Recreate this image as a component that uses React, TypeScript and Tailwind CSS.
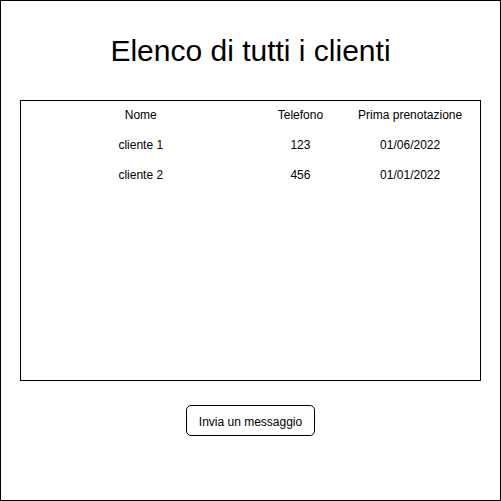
const clients = [
  { name: "cliente 1", phone: "123", firstBooking: "01/06/2022" },
  { name: "cliente 2", phone: "456", firstBooking: "01/01/2022" },
];

export default function App() {
  return (
    <main className="flex min-h-screen flex-col items-center border border-black bg-white px-[19px] font-['Liberation_Sans',Arial,sans-serif] text-xs text-black">
      <h1 className="mt-7 text-center text-[30px] leading-11">Elenco di tutti i clienti</h1>
      <section className="mt-[27px] min-h-[281px] w-full border border-black">
        <table className="w-full table-fixed text-center">
          <colgroup>
            <col className="w-12/23" />
            <col className="w-4/23" />
            <col className="w-7/23" />
          </colgroup>
          <thead>
            <tr className="h-[30px]">
              <th scope="col" className="p-0 pb-0.5 font-normal">Nome</th>
              <th scope="col" className="p-0 pb-0.5 font-normal">Telefono</th>
              <th scope="col" className="p-0 pb-0.5 font-normal">Prima prenotazione</th>
            </tr>
          </thead>
          <tbody>
            {clients.map((client) => (
              <tr key={client.name} className="h-[30px]">
                <td className="p-0 pb-0.5">{client.name}</td>
                <td className="p-0 pb-0.5">{client.phone}</td>
                <td className="p-0 pb-0.5">{client.firstBooking}</td>
              </tr>
            ))}
          </tbody>
        </table>
      </section>
      <button type="button" className="mt-6 h-[31px] rounded-[5px] border border-black bg-white px-3 pt-0.5">
        Invia un messaggio
      </button>
    </main>
  );
}
